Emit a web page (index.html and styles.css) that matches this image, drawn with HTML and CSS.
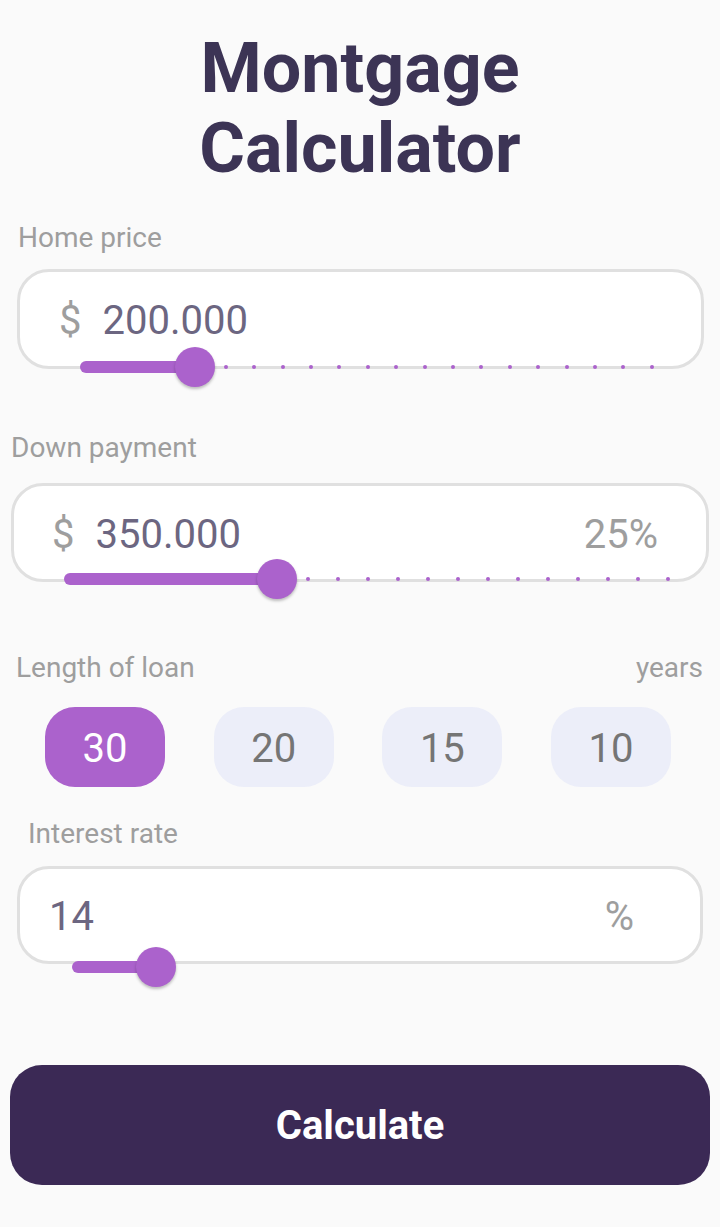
FILE: index.html
```html
<!DOCTYPE html>
<html lang="en">
<head>
<meta charset="utf-8">
<title>Montgage Calculator</title>
<link rel="stylesheet" href="styles.css">
</head>
<body>
<main class="page">
  <h1 class="title">Montgage<br>Calculator</h1>

  <section class="field field--home">
    <div class="label">Home price</div>
    <div class="box">
      <span class="currency">$</span>
      <span class="value">200.000</span>
    </div>
    <div class="slider slider--home">
      <div class="ticks">
        <i></i><i></i><i></i><i></i><i></i><i></i><i></i><i></i><i></i><i></i><i></i>
        <i></i><i></i><i></i><i></i><i></i><i></i><i></i><i></i><i></i><i></i>
      </div>
      <div class="track-active" style="width:116px"></div>
      <div class="thumb" style="left:95px"></div>
    </div>
  </section>

  <section class="field field--down">
    <div class="label">Down payment</div>
    <div class="box">
      <span class="currency">$</span>
      <span class="value">350.000</span>
      <span class="suffix">25%</span>
    </div>
    <div class="slider slider--down">
      <div class="ticks">
        <i></i><i></i><i></i><i></i><i></i><i></i><i></i><i></i><i></i><i></i><i></i>
        <i></i><i></i><i></i><i></i><i></i><i></i><i></i><i></i><i></i><i></i>
      </div>
      <div class="track-active" style="width:214px"></div>
      <div class="thumb" style="left:193px"></div>
    </div>
  </section>

  <section class="field field--length">
    <div class="label-row">
      <span class="label">Length of loan</span>
      <span class="label">years</span>
    </div>
    <div class="chips">
      <button class="chip chip--active">30</button>
      <button class="chip">20</button>
      <button class="chip">15</button>
      <button class="chip">10</button>
    </div>
  </section>

  <section class="field field--rate">
    <div class="label">Interest rate</div>
    <div class="box box--rate">
      <span class="value">14</span>
      <span class="suffix">%</span>
    </div>
    <div class="slider slider--rate">
      <div class="track-active" style="width:84px"></div>
      <div class="thumb" style="left:64px"></div>
    </div>
  </section>

  <button class="calculate">Calculate</button>
</main>
</body>
</html>
```

FILE: styles.css
```css
* { box-sizing: border-box; }

html, body {
  margin: 0;
  padding: 0;
  background: #fafafa;
}

body {
  font-family: Roboto, "Noto Sans", "Liberation Sans", sans-serif;
}

.page {
  width: 720px;
  height: 1227px;
  padding-top: 28px;
  overflow: hidden;
}

.title {
  margin: 0;
  font-size: 70px;
  line-height: 80px;
  font-weight: 700;
  color: #3c3455;
  text-align: center;
}

.label {
  font-size: 28px;
  line-height: 33px;
  color: #9e9e9e;
  font-weight: 400;
}

.box {
  display: flex;
  align-items: center;
  background: #ffffff;
  border: 3px solid #e0e0e0;
  border-radius: 32px;
  padding: 3px 48px 0 39px;
  font-size: 40px;
}

.currency {
  color: #9e9e9e;
  margin-right: 21px;
}

.value {
  color: #6c6681;
  flex: 1;
}

.suffix {
  color: #9e9e9e;
}

/* Home price */
.field--home .label { margin: 33px 0 0 18px; }
.field--home .box {
  margin: 15px 16px 0 17px;
  height: 100px;
}

/* Down payment */
.field--down .label { margin: 44px 0 0 11px; }
.field--down .box {
  margin: 19px 11px 0 11px;
  height: 99px;
  padding-left: 38px;
}

/* Length of loan */
.label-row {
  display: flex;
  justify-content: space-between;
  margin-top: 52px;
  padding: 0 17px 0 16px;
}

.chips {
  display: flex;
  gap: 48.7px;
  padding-left: 45px;
  margin-top: 23px;
}

.chip {
  width: 120px;
  height: 80px;
  border: none;
  border-radius: 30px;
  background: #eceef9;
  color: #757575;
  font-family: Roboto, "Noto Sans", "Liberation Sans", sans-serif;
  font-size: 40px;
  padding: 3px 0 0 0;
  line-height: 77px;
}

.chip--active {
  background: #ab62cc;
  color: #ffffff;
}

/* Interest rate */
.field--rate .label { margin: 30px 0 0 28px; }
.field--rate .box {
  margin: 16px 17px 0 17px;
  height: 98px;
}
.box--rate {
  padding: 3px 66px 0 29px;
}

/* Sliders */
.slider {
  position: relative;
  height: 40px;
}

.slider--home {
  margin: -22px 0 0 80px;
  width: 576px;
}

.slider--down {
  margin: -23px 0 0 64px;
  width: 608px;
}

.slider--rate {
  margin: -17px 0 0 72px;
  width: 560px;
}

.ticks {
  position: absolute;
  top: 18px;
  height: 4px;
  display: flex;
  justify-content: space-between;
}

.slider--home .ticks { left: 1.7px; right: 2px; }
.slider--down .ticks { left: 1.5px; right: 2px; }

.ticks i {
  display: block;
  width: 4px;
  height: 4px;
  border-radius: 50%;
  background: #ab62cc;
}

.track-active {
  position: absolute;
  left: 0;
  top: 14px;
  height: 12px;
  border-radius: 6px;
  background: #ab62cc;
}

.thumb {
  position: absolute;
  top: 0;
  width: 40px;
  height: 40px;
  border-radius: 50%;
  background: #ab62cc;
  box-shadow: 0 2px 3px rgba(0, 0, 0, 0.25);
}

/* Button */
.calculate {
  display: block;
  width: 700px;
  height: 120px;
  margin: 78px 0 0 10px;
  border: none;
  border-radius: 32px;
  background: #3b2955;
  color: #ffffff;
  font-family: Roboto, "Noto Sans", "Liberation Sans", sans-serif;
  font-size: 40px;
  font-weight: 700;
  padding: 0;
}
```
